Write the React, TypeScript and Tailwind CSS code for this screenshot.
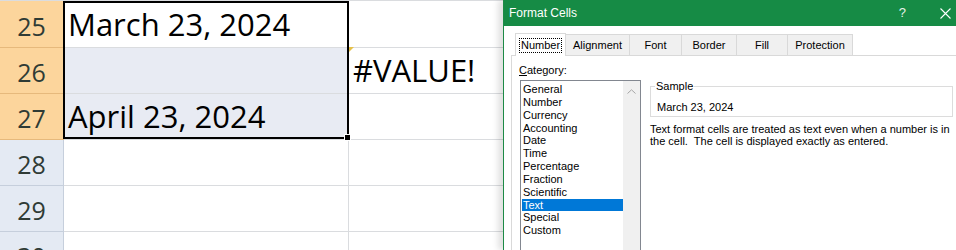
import React from "react";

type Row = {
    n: number;
    h: string;
    sel: boolean;
    fill: boolean;
    b: string;
    c: string;
};

const rows: Row[] = [
    { n: 25, h: "h-[47px]", sel: true, fill: false, b: "March 23, 2024", c: "" },
    { n: 26, h: "h-[46px]", sel: true, fill: true, b: "", c: "#VALUE!" },
    { n: 27, h: "h-[46px]", sel: true, fill: true, b: "April 23, 2024", c: "" },
    { n: 28, h: "h-[46px]", sel: false, fill: false, b: "", c: "" },
    { n: 29, h: "h-[46px]", sel: false, fill: false, b: "", c: "" },
    { n: 30, h: "h-[46px]", sel: false, fill: false, b: "", c: "" },
];

const categories = [
    "General",
    "Number",
    "Currency",
    "Accounting",
    "Date",
    "Time",
    "Percentage",
    "Fraction",
    "Scientific",
    "Text",
    "Special",
    "Custom",
];

const tabs = [
    { label: "Alignment", w: "w-[64px]" },
    { label: "Font", w: "w-[52px]" },
    { label: "Border", w: "w-[55px]" },
    { label: "Fill", w: "w-[51px]" },
    { label: "Protection", w: "w-[65px]" },
];

const Sheet = () => {
    return (
        <div className="relative w-[503px] shrink-0 border-t border-[#dadcdf] font-['Open_Sans',sans-serif]">
            {rows.map((r) => (
                <div key={r.n} className={`flex ${r.h}`}>
                    <div
                        className={`flex w-[64px] shrink-0 items-end justify-center border-b border-r pb-[8px] text-[25px] leading-none text-[#2f3b35] ${
                            r.sel ? "border-[#e6b97c] bg-[#fcd59c]" : "border-[#c6cfdc] bg-[#e4eaf3]"
                        }`}
                    >
                        {r.n}
                    </div>
                    <div
                        className={`flex w-[285px] shrink-0 items-end border-b border-r border-[#dadcdf] pb-[7px] pl-[4px] text-[31px] leading-none text-black ${
                            r.fill ? "bg-[#e8ebf3]" : "bg-white"
                        }`}
                    >
                        {r.b}
                    </div>
                    <div className="flex flex-1 items-end border-b border-[#dadcdf] pb-[7px] pl-[4px] text-[31px] leading-none text-black">
                        {r.c}
                    </div>
                </div>
            ))}
            {/* selection range */}
            <div className="pointer-events-none absolute left-[63px] top-0 h-[138px] w-[286px] border-2 border-black" />
            <div className="pointer-events-none absolute left-[344px] top-[133px] h-[7px] w-[7px] border border-white bg-black" />
            {/* error indicator */}
            <div className="pointer-events-none absolute left-[349px] top-[46px] h-0 w-0 border-r-[5px] border-t-[5px] border-r-transparent border-t-[#e6c14a]" />
        </div>
    );
};

const FormatCells = () => {
    return (
        <div className="relative z-10 flex flex-1 flex-col border-l border-[#1d8a46] bg-white font-['Liberation_Sans',Arial,sans-serif] text-[11px] text-black shadow-[-5px_0_6px_rgba(0,0,0,0.12)]">
            <div className="flex h-[26px] shrink-0 items-center bg-[#168b45] pl-[5px] text-[12px] text-white">
                <span>Format Cells</span>
                <span className="ml-auto text-[13px] text-[#e6f2ea]">?</span>
                <svg className="ml-[34px] mr-[5px]" width="11" height="11" viewBox="0 0 11 11">
                    <path d="M0.5 0.5 L10.5 10.5 M10.5 0.5 L0.5 10.5" stroke="#ffffff" strokeWidth="1.1" fill="none" />
                </svg>
            </div>

            <div className="flex items-end pl-[11px] pt-[7px]">
                <div className="relative z-10 -mb-px flex h-[23px] w-[51px] items-center justify-center border-x border-t border-[#d9d9d9] bg-white">
                    <span className="border border-dotted border-black px-[1px] leading-[13px]">Number</span>
                </div>
                {tabs.map((t) => (
                    <div
                        key={t.label}
                        className={`flex h-[21px] ${t.w} items-center justify-center border-r border-t border-[#d9d9d9] bg-[#f0f0f0]`}
                    >
                        {t.label}
                    </div>
                ))}
            </div>

            <div className="ml-[7px] flex flex-1 border-l border-t border-[#d9d9d9] pl-[7px] pt-[8px]">
                <div className="flex flex-col">
                    <div className="leading-[13px]">
                        <span className="underline">C</span>ategory:
                    </div>
                    <div className="ml-[1px] mt-[3px] flex h-[190px] w-[121px] border border-[#828790]">
                        <div className="flex-1 pl-[1px] pt-[2px]">
                            {categories.map((c) => (
                                <div
                                    key={c}
                                    className={`h-[12.85px] pl-[1px] leading-[12.85px] ${
                                        c === "Text" ? "bg-[#0078d7] text-white" : ""
                                    }`}
                                >
                                    {c}
                                </div>
                            ))}
                        </div>
                        <div className="w-[17px] bg-[#f0f0f0] pt-[8px]">
                            <svg className="mx-auto" width="9" height="5" viewBox="0 0 9 5">
                                <path d="M0.5 4.5 L4.5 0.8 L8.5 4.5" stroke="#a6a6a6" strokeWidth="1" fill="none" />
                            </svg>
                        </div>
                    </div>
                </div>

                <div className="ml-[9px] flex w-[303px] flex-col pt-[16px]">
                    <fieldset className="border border-[#dcdcdc] pb-[2px] pl-[6px]">
                        <legend className="-ml-[2px] px-[1px] leading-[13px]">Sample</legend>
                        <div className="pt-[8px] leading-[13px]">March 23, 2024</div>
                    </fieldset>
                    <div className="mt-[6px] leading-[12px]">
                        Text format cells are treated as text even when a number is in
                        <br />
                        the cell.&nbsp; The cell is displayed exactly as entered.
                    </div>
                </div>
            </div>
        </div>
    );
};

const App = () => {
    return (
        <div className="flex h-[250px] w-[956px] overflow-hidden bg-white">
            <Sheet />
            <FormatCells />
        </div>
    );
};

export default App;
